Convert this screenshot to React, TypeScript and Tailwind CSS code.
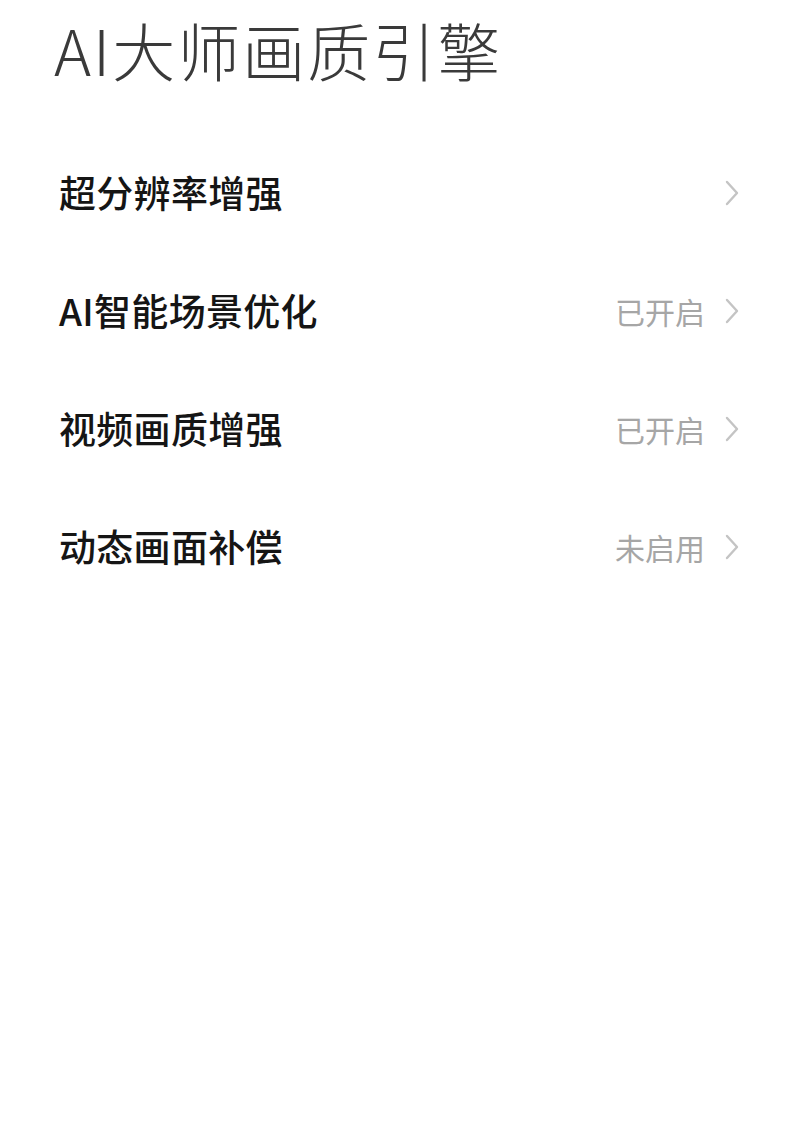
import React from 'react'

type Item = { label: string; status?: string }

const ITEMS: Item[] = [
  { label: '超分辨率增强' },
  { label: 'AI智能场景优化', status: '已开启' },
  { label: '视频画质增强', status: '已开启' },
  { label: '动态画面补偿', status: '未启用' },
]

const Chevron = () => (
  <svg width="18" height="28" viewBox="0 0 18 28" fill="none" className="shrink-0">
    <path
      d="M4 3 L14 14 L4 25"
      stroke="#c4c4c4"
      strokeWidth="2.4"
      strokeLinecap="round"
      strokeLinejoin="round"
    />
  </svg>
)

const Row = ({ label, status }: Item) => (
  <div className="h-[118px] flex items-center justify-between pl-[59px] pr-[59px]">
    <span className="text-[37px] font-medium text-[#151515] tracking-[0.3px]">{label}</span>
    <div className="flex items-center gap-[18px]">
      {status && <span className="text-[30px] text-[#a6a6a6]">{status}</span>}
      <Chevron />
    </div>
  </div>
)

export default function App() {
  return (
    <div
      className="w-[800px] h-[1137px] bg-white overflow-hidden"
      style={{ fontFamily: '"Noto Sans CJK SC", "Noto Sans", sans-serif' }}
    >
      <div className="h-[96px] flex items-center pl-[54px]">
        <h1 className="text-[63px] font-light text-[#3a3a3a] leading-none tracking-[2px]">
          AI大师画质引擎
        </h1>
      </div>
      <div className="mt-[38px] flex flex-col">
        {ITEMS.map((item) => (
          <Row key={item.label} {...item} />
        ))}
      </div>
    </div>
  )
}
